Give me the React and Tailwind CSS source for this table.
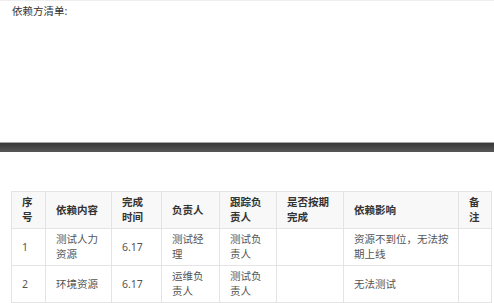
import React from 'react';

const cols = [34, 66, 50, 58, 57, 67, 115, 33];

const headers = ['序号', '依赖内容', '完成时间', '负责人', '跟踪负责人', '是否按期完成', '依赖影响', '备注'];

const rows = [
  { h: 'h-[36px]', cells: ['1', '测试人力资源', '6.17', '测试经理', '测试负责人', '', '资源不到位，无法按期上线', ''] },
  { h: 'h-[37px]', cells: ['2', '环境资源', '6.17', '运维负责人', '测试负责人', '', '无法测试', ''] },
];

// 依赖影响列右边距小一点，保证一行九个字
const padFor = (i) => (i === 6 ? 'pl-[10px] pr-[4px]' : 'px-[10px]');

export default function App() {
  return (
    <div
      className="w-[494px] h-[303px] overflow-hidden bg-white flex flex-col"
      style={{ fontFamily: '"Noto Sans", "Noto Sans CJK SC", sans-serif' }}
    >
      {/* 标题区域 */}
      <div className="h-[143px] border-t border-[#eeeeee] px-[12px] pt-[3px]">
        <p className="text-[10.5px] leading-[15px] text-[#333]">依赖方清单:</p>
      </div>

      {/* 分隔条 */}
      <div className="h-[10px] border-t border-[#a8a8a8] bg-gradient-to-b from-[#383838] to-[#585858]" />

      {/* 表格 */}
      <div className="pt-[39px] pl-[11px]">
        <table className="table-fixed border-collapse w-[480px] text-[10.5px] leading-[15px]">
          <colgroup>
            {cols.map((w, i) => (
              <col key={i} style={{ width: w }} />
            ))}
          </colgroup>
          <thead>
            <tr className="h-[37px] bg-[#f8f8f8]">
              {headers.map((t, i) => (
                <th
                  key={i}
                  className={`border border-[#e4e4e4] ${padFor(i)} py-[3px] text-left align-middle font-semibold text-[#333]`}
                >
                  {t}
                </th>
              ))}
            </tr>
          </thead>
          <tbody>
            {rows.map((r, ri) => (
              <tr key={ri} className={r.h}>
                {r.cells.map((c, ci) => (
                  <td
                    key={ci}
                    className={`border border-[#e4e4e4] ${padFor(ci)} py-[3px] text-left align-middle text-[#555]`}
                  >
                    {c}
                  </td>
                ))}
              </tr>
            ))}
          </tbody>
        </table>
      </div>
    </div>
  );
}
